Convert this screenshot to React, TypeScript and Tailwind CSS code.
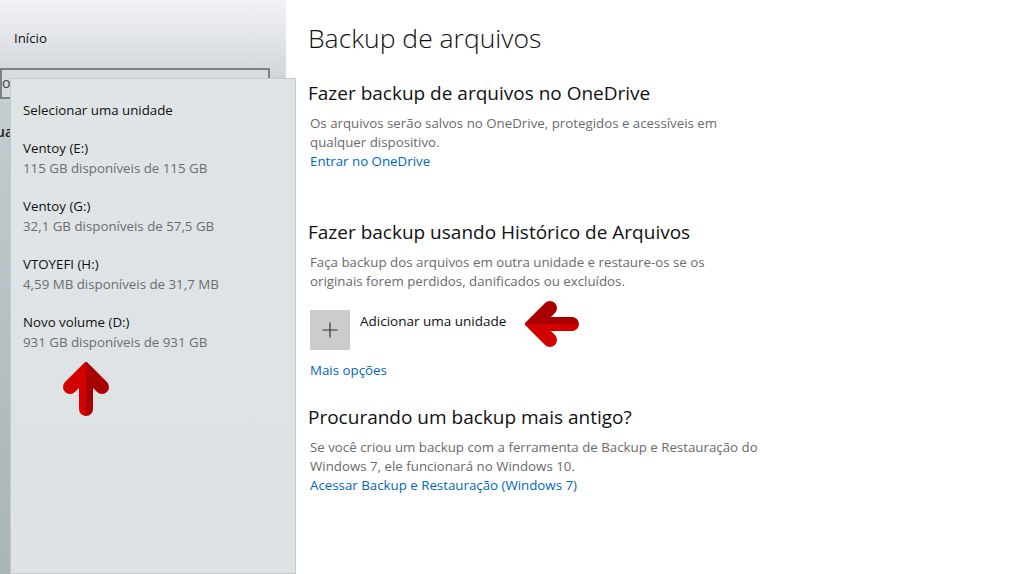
import React from "react";

interface DriveItemProps {
  name: string;
  space: string;
}

const DriveItem: React.FC<DriveItemProps> = ({ name, space }) => {
  return (
    <div className="mb-[18px]">
      <div className="text-[13.3px] leading-[20px] text-[#111]">{name}</div>
      <div className="text-[13.3px] leading-[20px] text-[#6b6e70]">{space}</div>
    </div>
  );
};

// seta vermelha de duas cores, apontando para cima
const RedArrow = ({ className }: { className: string }) => {
  return (
    <svg viewBox="0 0 48 54" className={className}>
      <defs>
        <clipPath id="leftHalf">
          <rect x="0" y="0" width="24" height="54" />
        </clipPath>
        <clipPath id="rightHalf">
          <rect x="24" y="0" width="24" height="54" />
        </clipPath>
      </defs>
      <g clipPath="url(#leftHalf)" stroke="#d30000" fill="none" strokeWidth="14" strokeLinecap="round">
        <path d="M8 25 L24 9 L40 25" strokeLinejoin="miter" />
        <path d="M24 12 L24 47" />
      </g>
      <g clipPath="url(#rightHalf)" stroke="#a80000" fill="none" strokeWidth="14" strokeLinecap="round">
        <path d="M8 25 L24 9 L40 25" strokeLinejoin="miter" />
        <path d="M24 12 L24 47" />
      </g>
    </svg>
  );
};

interface SectionProps {
  title: string;
  lines: string[];
  link?: string;
}

const Section: React.FC<SectionProps> = ({ title, lines, link }) => {
  return (
    <div>
      <h2 className="text-[19px] leading-[28px] text-[#111] mb-[7px]">{title}</h2>
      {lines.map((line, index) => (
        <p key={index} className="pl-[2px] text-[13.3px] leading-[19px] text-[#6b6b6b]">
          {line}
        </p>
      ))}
      {link && <a className="block pl-[2px] text-[13.3px] leading-[18px] text-[#0067c0]">{link}</a>}
    </div>
  );
};

const App = () => {
  const drives = [
    { name: "Ventoy (E:)", space: "115 GB disponíveis de 115 GB" },
    { name: "Ventoy (G:)", space: "32,1 GB disponíveis de 57,5 GB" },
    { name: "VTOYEFI (H:)", space: "4,59 MB disponíveis de 31,7 MB" },
    { name: "Novo volume (D:)", space: "931 GB disponíveis de 931 GB" },
  ];

  return (
    <div
      className="relative flex h-[574px] w-full overflow-hidden bg-white"
      style={{ fontFamily: '"Open Sans", "Noto Sans", sans-serif' }}
    >
      {/* menu lateral, quase todo coberto pelo flyout */}
      <aside className="w-[286px] shrink-0 bg-gradient-to-b from-[#f3f2f6] via-[#c3ccd0] via-[18%] to-[#a7b4b8]">
        <div className="pl-[14px] pt-[28px] text-[13.3px] leading-[20px] text-[#111]">Início</div>
        <div className="mt-[20px] h-[31px] w-[270px] border-2 border-[#7b8285] bg-[#d6dcdf] text-[14px] leading-[26px] text-[#444]">
          o
        </div>
        <div className="mt-[22px] -ml-[4px] text-[14px] font-semibold text-[#222]">ua</div>
      </aside>

      <main className="flex-1 pl-[22px] pt-[19px]">
        <h1 className="text-[26.5px] leading-[38px] font-light text-[#111] mb-[22px]">Backup de arquivos</h1>

        <Section
          title="Fazer backup de arquivos no OneDrive"
          lines={[
            "Os arquivos serão salvos no OneDrive, protegidos e acessíveis em",
            "qualquer dispositivo.",
          ]}
          link="Entrar no OneDrive"
        />

        <div className="mt-[48px]">
          <Section
            title="Fazer backup usando Histórico de Arquivos"
            lines={[
              "Faça backup dos arquivos em outra unidade e restaure-os se os",
              "originais forem perdidos, danificados ou excluídos.",
            ]}
          />
        </div>

        <div className="mt-[19px] flex items-start">
          <div className="ml-[2px] flex h-[40px] w-[40px] items-center justify-center bg-[#cccccc]">
            <svg viewBox="0 0 16 16" className="h-[16px] w-[16px]">
              <path d="M8 0.5 V15.5 M0.5 8 H15.5" stroke="#333" strokeWidth="1.2" />
            </svg>
          </div>
          <span className="ml-[10px] mt-[1px] text-[13.5px] leading-[20px] text-[#111]">Adicionar uma unidade</span>
        </div>

        <a className="mt-[10px] ml-[2px] block text-[13.3px] leading-[20px] text-[#0067c0]">Mais opções</a>

        <div className="mt-[23px]">
          <Section
            title="Procurando um backup mais antigo?"
            lines={[
              "Se você criou um backup com a ferramenta de Backup e Restauração do",
              "Windows 7, ele funcionará no Windows 10.",
            ]}
            link="Acessar Backup e Restauração (Windows 7)"
          />
        </div>
      </main>

      {/* flyout de seleção de unidade */}
      <div className="absolute left-[10px] top-[78px] bottom-0 z-10 w-[286px] border border-[#c4c9cb] bg-gradient-to-b from-[#dfe4e6] to-[#dde3e5] pl-[12px] pt-[21px]">
        <div className="mb-[18px] text-[13.3px] leading-[20px] text-[#111]">Selecionar uma unidade</div>
        {drives.map((drive, index) => (
          <DriveItem key={index} name={drive.name} space={drive.space} />
        ))}
      </div>

      <RedArrow className="absolute left-[62px] top-[362px] z-20 h-[54px] w-[48px]" />
      <RedArrow className="absolute left-[528px] top-[297px] z-20 h-[54px] w-[48px] -rotate-90" />
    </div>
  );
};

export default App;
